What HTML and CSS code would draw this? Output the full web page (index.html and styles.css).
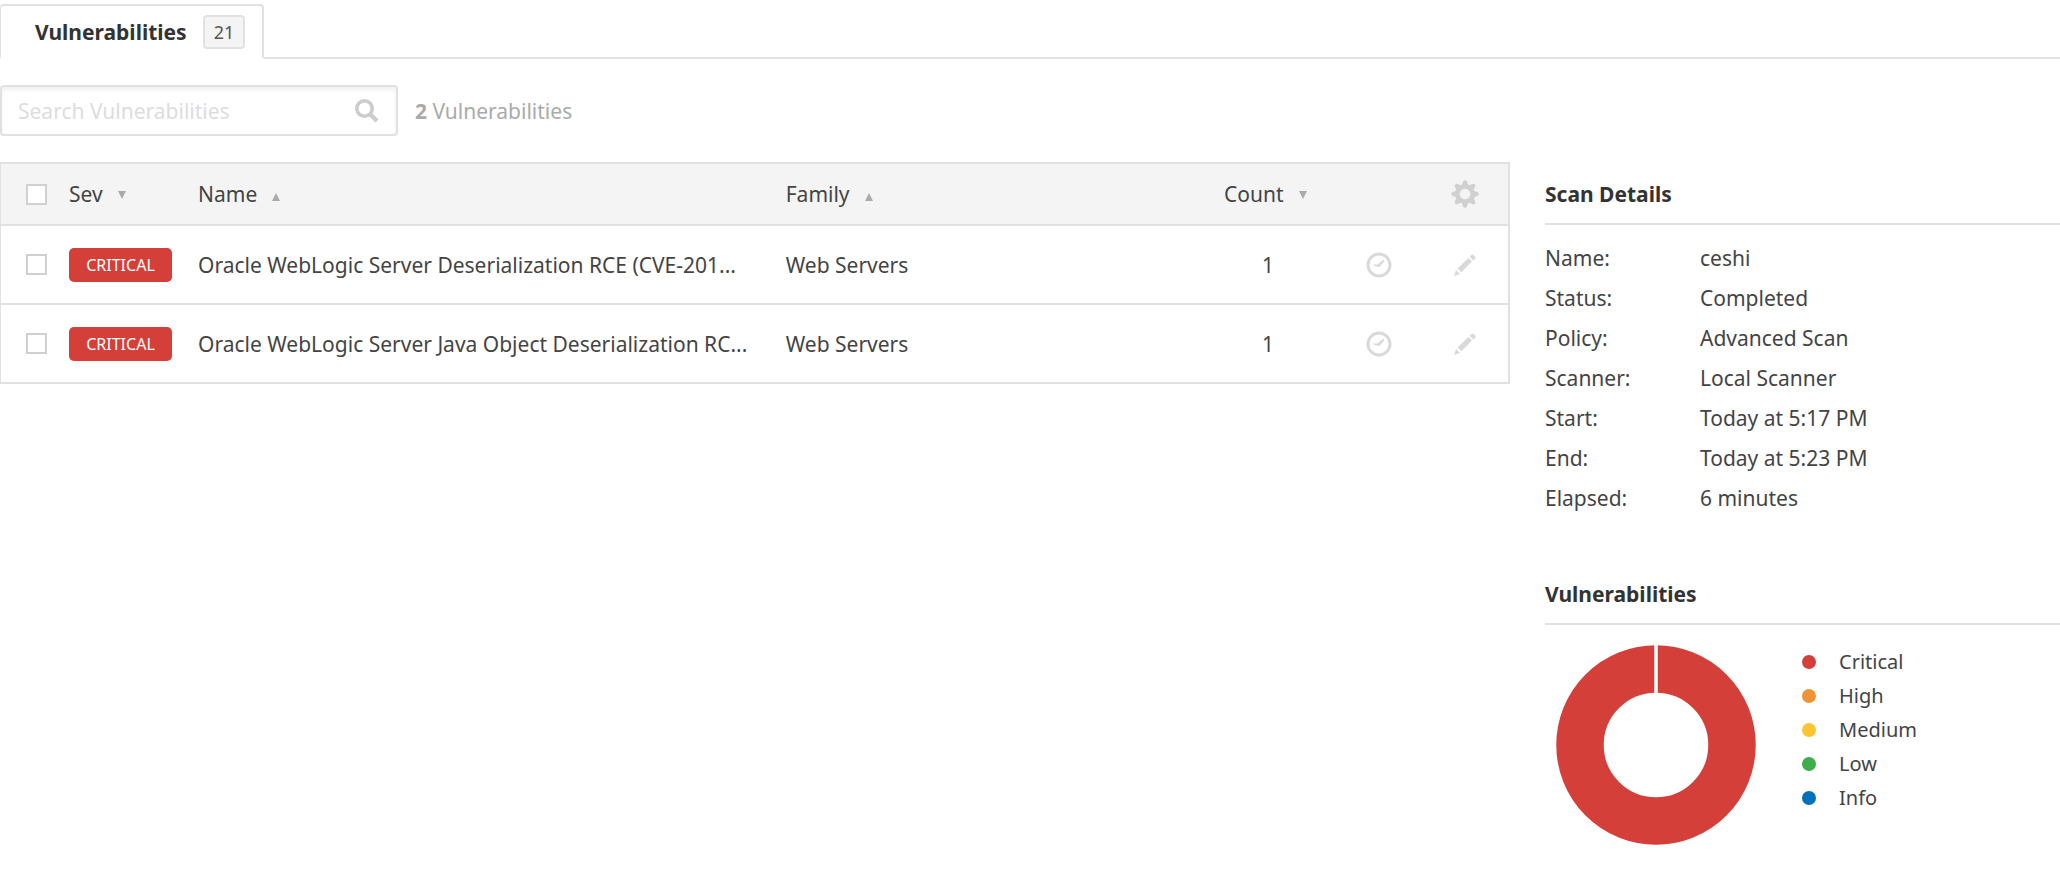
FILE: index.html
```html
<!DOCTYPE html>
<html lang="en">
<head>
<meta charset="utf-8">
<title>Vulnerabilities</title>
<link rel="stylesheet" href="styles.css">
</head>
<body>
<svg class="sprite" aria-hidden="true">
  <symbol id="down" viewBox="0 0 8 8"><path d="M0 0h8L4 8z"/></symbol>
  <symbol id="up" viewBox="0 0 8 8"><path d="M0 8h8L4 0z"/></symbol>
  <symbol id="clock" viewBox="0 0 26 26">
    <circle cx="13" cy="13" r="11" fill="none" stroke="currentColor" stroke-width="3"/>
    <path d="M7.500 12.400l4 .2 5.800-4.800 1.200 1.200-4.800 5.800h-2l-4.200-1.200z"/>
  </symbol>
  <symbol id="pencil" viewBox="0 0 22 22">
    <path d="M0 22l2-6 4 4zM3.500 14.500L14.500 4l3.500 3.500L7.300 18.300zM15.700 2.800L17.700.8q.8-.8 1.600 0l2 2q.8.800 0 1.600l-2 2z"/>
  </symbol>
</svg>
<nav class="tabs">
  <a class="tab" href="#vulnerabilities">Vulnerabilities <span class="tab-count">21</span></a>
</nav>
<div class="toolbar">
  <form class="search" role="search">
    <input class="search-input" type="text" placeholder="Search Vulnerabilities" aria-label="Search Vulnerabilities">
    <button class="icon-button" type="button" aria-label="Search">
      <svg class="search-icon" viewBox="0 0 24 24"><circle cx="9.500" cy="9.500" r="7.700" fill="none" stroke="currentColor" stroke-width="3.600"/><path d="M15 15l7 7" stroke="currentColor" stroke-width="4.400"/></svg>
    </button>
  </form>
  <p class="result-count"><strong>2</strong> Vulnerabilities</p>
</div>
<div class="content">
  <main class="main" id="vulnerabilities">
    <table class="grid">
      <colgroup><col class="col-check"><col class="col-sev"><col class="col-name"><col><col class="col-count"><col class="col-icon"><col class="col-icon"></colgroup>
      <thead>
        <tr>
          <th class="check"><input class="box" type="checkbox" aria-label="Select all"></th>
          <th><button class="sort" type="button">Sev <svg class="arrow"><use href="#down"/></svg></button></th>
          <th><button class="sort" type="button">Name <svg class="arrow arrow-up"><use href="#up"/></svg></button></th>
          <th><button class="sort" type="button">Family <svg class="arrow arrow-up"><use href="#up"/></svg></button></th>
          <th class="count-head"><button class="sort" type="button">Count <svg class="arrow"><use href="#down"/></svg></button></th>
          <th></th>
          <th>
            <button class="icon-button" type="button" aria-label="Settings">
              <svg class="gear" viewBox="-14 -14 28 28"><g fill="currentColor"><path id="teeth" d="M-3-9l1-3.600q2-2.400 4 0L3-9V9l-1 3.600q-2 2.400-4 0L-3 9z"/><use href="#teeth" transform="rotate(45)"/><use href="#teeth" transform="rotate(90)"/><use href="#teeth" transform="rotate(135)"/><circle r="10"/></g><circle class="gear-hole" r="5.300"/></svg>
            </button>
          </th>
        </tr>
      </thead>
      <tbody>
        <tr>
          <td class="check"><input class="box" type="checkbox" aria-label="Select row 1"></td>
          <td><span class="severity">CRITICAL</span></td>
          <td>Oracle WebLogic Server Deserialization RCE (CVE-201...</td>
          <td>Web Servers</td>
          <td class="center">1</td>
          <td><button class="icon-button" type="button" aria-label="Snooze"><svg class="clock"><use href="#clock"/></svg></button></td>
          <td><button class="icon-button" type="button" aria-label="Edit"><svg class="pencil"><use href="#pencil"/></svg></button></td>
        </tr>
        <tr>
          <td class="check"><input class="box" type="checkbox" aria-label="Select row 2"></td>
          <td><span class="severity">CRITICAL</span></td>
          <td>Oracle WebLogic Server Java Object Deserialization RC...</td>
          <td>Web Servers</td>
          <td class="center">1</td>
          <td><button class="icon-button" type="button" aria-label="Snooze"><svg class="clock"><use href="#clock"/></svg></button></td>
          <td><button class="icon-button" type="button" aria-label="Edit"><svg class="pencil"><use href="#pencil"/></svg></button></td>
        </tr>
      </tbody>
    </table>
  </main>
  <aside class="side">
    <section>
      <h2 class="side-title">Scan Details</h2>
      <dl class="details">
        <dt>Name:</dt><dd>ceshi</dd>
        <dt>Status:</dt><dd>Completed</dd>
        <dt>Policy:</dt><dd>Advanced Scan</dd>
        <dt>Scanner:</dt><dd>Local Scanner</dd>
        <dt>Start:</dt><dd>Today at 5:17 PM</dd>
        <dt>End:</dt><dd>Today at 5:23 PM</dd>
        <dt>Elapsed:</dt><dd>6 minutes</dd>
      </dl>
    </section>
    <section>
      <h2 class="side-title">Vulnerabilities</h2>
      <div class="chart">
        <svg class="donut" viewBox="0 0 200 200" role="img" aria-label="All critical"><circle cx="100" cy="100" r="76" fill="none" stroke="#d43f3a" stroke-width="47.500"/><path d="M100 0v50" stroke="#fff" stroke-width="3.500"/></svg>
        <ul class="legend">
          <li class="critical">Critical</li>
          <li class="high">High</li>
          <li class="medium">Medium</li>
          <li class="low">Low</li>
          <li class="info">Info</li>
        </ul>
      </div>
    </section>
  </aside>
</div>
</body>
</html>
```
FILE: styles.css
```css
* { box-sizing: border-box; }
body {
  margin: 0;
  background: #fff;
  color: #444;
  font: 21px/30px "Noto Sans", "Open Sans", sans-serif;
}
button, input { font: inherit; color: inherit; }
button { padding: 0; border: 0; background: none; }
.sprite { display: none; }

.tabs { display: flex; padding-top: 4px; box-shadow: inset 0 -2px #e1e1e1; }
.tab {
  display: flex;
  align-items: center;
  gap: 16px;
  height: 55px;
  padding: 0 17px 0 34px;
  border: 2px solid #e1e1e1;
  border-left-width: 1px;
  border-bottom-color: #fff;
  border-radius: 4px 4px 0 0;
  background: #fff;
  color: #333;
  font-weight: 700;
  text-decoration: none;
}
.tab-count {
  padding: 0 9px;
  border: 2px solid #e1e1e1;
  border-radius: 4px;
  background: #f4f4f4;
  color: #555;
  font-weight: 400;
  font-size: 18px;
}

.toolbar { display: flex; align-items: center; gap: 17px; padding: 26px 0; }
.search {
  display: flex;
  align-items: center;
  width: 398px;
  height: 51px;
  padding: 0 17px 0 16px;
  border: 2px solid #e1e1e1;
  border-radius: 4px;
  box-shadow: inset 0 3px 4px #f2f2f2;
}
.search-input { flex: 1; min-width: 0; padding: 0; border: 0; outline: 0; background: none; }
.search-input::placeholder { color: #ddd; opacity: 1; }
.icon-button { display: flex; margin: 0 auto; color: #d9d9d9; fill: currentColor; }
.search-icon { width: 24px; height: 24px; color: #ccc; }
.result-count { margin: 0; color: #aaa; }

.content { display: flex; gap: 35px; }
.main { flex: 1; min-width: 0; }
.grid {
  width: 100%;
  table-layout: fixed;
  border-spacing: 0;
  border: 2px solid #e1e1e1;
  border-left-width: 1px;
  border-bottom: 0;
}
.grid th, .grid td { padding: 0; border-bottom: 2px solid #e1e1e1; text-align: left; font-weight: 400; white-space: nowrap; }
.grid th { height: 62px; background: #f4f4f4; }
.grid td { height: 79px; }
.grid .check { padding-left: 25px; }
.grid .center { text-align: center; }
.grid .count-head { padding-left: 24px; }
.col-check { width: 68px; }
.col-sev { width: 129px; }
.col-name { width: 39%; }
.col-count { width: 136px; }
.col-icon { width: 86px; }
.box {
  display: block;
  appearance: none;
  width: 21px;
  height: 21px;
  margin: 0;
  border: 2px solid #d0d0d0;
  background: #fff;
}
.sort { display: flex; align-items: center; gap: 15px; }
.arrow { width: 8px; height: 8px; margin-top: 2px; fill: #aaa; }
.arrow-up { margin-top: 5px; }
.severity {
  display: block;
  width: 103px;
  border-radius: 5px;
  background: #d43f3a;
  color: #fff;
  font-size: 16px;
  line-height: 34px;
  text-align: center;
}
.gear { width: 28px; height: 28px; color: #d0d0d0; }
.gear-hole { fill: #f4f4f4; }
.clock { width: 26px; height: 26px; }
.pencil { width: 22px; height: 22px; }

.side { flex: 0 0 25%; }
.side-title {
  margin: 0;
  padding: 17px 0 14px;
  border-bottom: 2px solid #e1e1e1;
  color: #333;
  font-size: 21px;
  line-height: 30px;
}
.details { display: grid; grid-template-columns: 155px 1fr; margin: 0; padding: 13px 0 44px; line-height: 40px; }
.details dd { margin: 0; }
.chart { display: flex; gap: 46px; padding: 20px 0 0 11px; }
.donut { width: 200px; height: 200px; }
.legend { margin: 0; padding: 0; list-style: none; font-size: 20px; line-height: 34px; }
.legend li { display: flex; align-items: center; gap: 23px; }
.legend li::before { content: ""; width: 14px; height: 14px; border-radius: 50%; background: var(--dot); }
.critical { --dot: #d43f3a; }
.high { --dot: #ee9336; }
.medium { --dot: #fdc431; }
.low { --dot: #3fae49; }
.info { --dot: #0071b9; }
```
